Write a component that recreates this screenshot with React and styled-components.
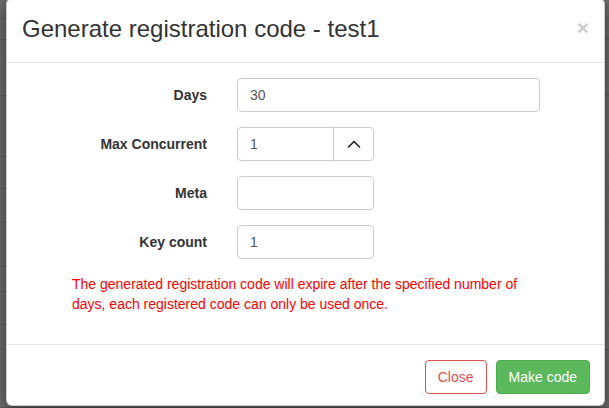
import React from "react";
import styled, { createGlobalStyle } from "styled-components";

const GlobalStyle = createGlobalStyle`
  html, body { margin: 0; padding: 0; }
  body {
    background: #6d6d6d;
    font-family: "Liberation Sans", Arial, Helvetica, sans-serif;
    font-size: 14px;
    color: #333;
    overflow: hidden;
  }
  * { box-sizing: border-box; }
`;

const Page = styled.div`
  position: relative;
  width: 609px;
  height: 408px;
  overflow: hidden;
  background: #6d6d6d;
`;

const BgRow = styled.div`
  height: ${(p) => p.$h}px;
  border-bottom: 1px solid #5e5e5e;
`;

const Modal = styled.div`
  position: absolute;
  top: -2px;
  left: 6px;
  width: 599px;
  background: #fff;
  border: 1px solid rgba(0, 0, 0, 0.2);
  border-radius: 6px;
  box-shadow: 0 5px 15px rgba(0, 0, 0, 0.5);
  display: flex;
  flex-direction: column;
`;

const Header = styled.div`
  display: flex;
  justify-content: space-between;
  align-items: flex-start;
  padding: 14px 15px 17px 15px;
  border-bottom: 1px solid #e5e5e5;
`;

const Title = styled.h4`
  margin: 0;
  font-size: 24px;
  line-height: 32px;
  font-weight: 400;
  color: #333;
`;

const CloseX = styled.button`
  border: 0;
  background: transparent;
  padding: 0;
  margin-top: 4px;
  font-family: "Liberation Sans", Arial, sans-serif;
  font-size: 21px;
  font-weight: 700;
  line-height: 1;
  color: #000;
  opacity: 0.2;
  cursor: pointer;
`;

const Body = styled.div`
  padding: 15px 15px 30px 15px;
`;

const Form = styled.div`
  display: grid;
  grid-template-columns: 185px 1fr;
  column-gap: 30px;
  row-gap: 15px;
  align-items: center;
`;

const Label = styled.label`
  text-align: right;
  font-weight: 700;
  font-size: 14px;
  color: #333;
  line-height: 20px;
`;

const Input = styled.input`
  display: block;
  width: ${(p) => p.$w}px;
  height: 34px;
  padding: 6px 12px;
  font-family: "Liberation Sans", Arial, sans-serif;
  font-size: 14px;
  line-height: 20px;
  color: #555;
  background: #fff;
  border: 1px solid #ccc;
  border-radius: ${(p) => (p.$joined ? "4px 0 0 4px" : "4px")};
  outline: none;
`;

const InputGroup = styled.div`
  display: flex;
  width: 137px;
`;

const SpinButton = styled.button`
  width: 41px;
  height: 34px;
  margin-left: -1px;
  display: flex;
  align-items: center;
  justify-content: center;
  background: #fff;
  border: 1px solid #ccc;
  border-radius: 0 4px 4px 0;
  padding: 0;
  color: #333;
`;

const Help = styled.p`
  margin: 15px 0 0 50px;
  width: 460px;
  font-size: 14px;
  line-height: 20px;
  color: #ff0000;
`;

const Footer = styled.div`
  display: flex;
  justify-content: flex-end;
  gap: 9px;
  padding: 15px 14px 11px 15px;
  border-top: 1px solid #e5e5e5;
`;

const Button = styled.button`
  height: 34px;
  padding: 6px 12px;
  font-family: "Liberation Sans", Arial, sans-serif;
  font-size: 14px;
  line-height: 20px;
  border-radius: 4px;
  border: 1px solid ${(p) => (p.$variant === "danger" ? "#d9534f" : "#4cae4c")};
  background: ${(p) => (p.$variant === "danger" ? "#fff" : "#5cb85c")};
  color: ${(p) => (p.$variant === "danger" ? "#d9534f" : "#fff")};
  cursor: pointer;
`;

const bgRows = [19, 21, 56, 61, 32, 34, 44, 25, 33, 25, 58];

export default function App() {
  return (
    <>
      <GlobalStyle />
      <Page>
        {bgRows.map((h, i) => (
          <BgRow key={i} $h={h} />
        ))}
        <Modal>
          <Header>
            <Title>Generate registration code - test1</Title>
            <CloseX aria-label="Close">×</CloseX>
          </Header>
          <Body>
            <Form>
              <Label>Days</Label>
              <Input $w={303} defaultValue="30" />
              <Label>Max Concurrent</Label>
              <InputGroup>
                <Input $w={97} $joined defaultValue="1" />
                <SpinButton>
                  <svg width="14" height="8" viewBox="0 0 14 8" fill="none">
                    <path d="M1.5 7 L7 1.5 L12.5 7" stroke="#222" strokeWidth="1.6" strokeLinecap="round" strokeLinejoin="round" />
                  </svg>
                </SpinButton>
              </InputGroup>
              <Label>Meta</Label>
              <Input $w={137} defaultValue="" />
              <Label>Key count</Label>
              <Input $w={137} defaultValue="1" />
            </Form>
            <Help>
              The generated registration code will expire after the specified number of days, each registered code can only be used once.
            </Help>
          </Body>
          <Footer>
            <Button $variant="danger">Close</Button>
            <Button $variant="success">Make code</Button>
          </Footer>
        </Modal>
      </Page>
    </>
  );
}
